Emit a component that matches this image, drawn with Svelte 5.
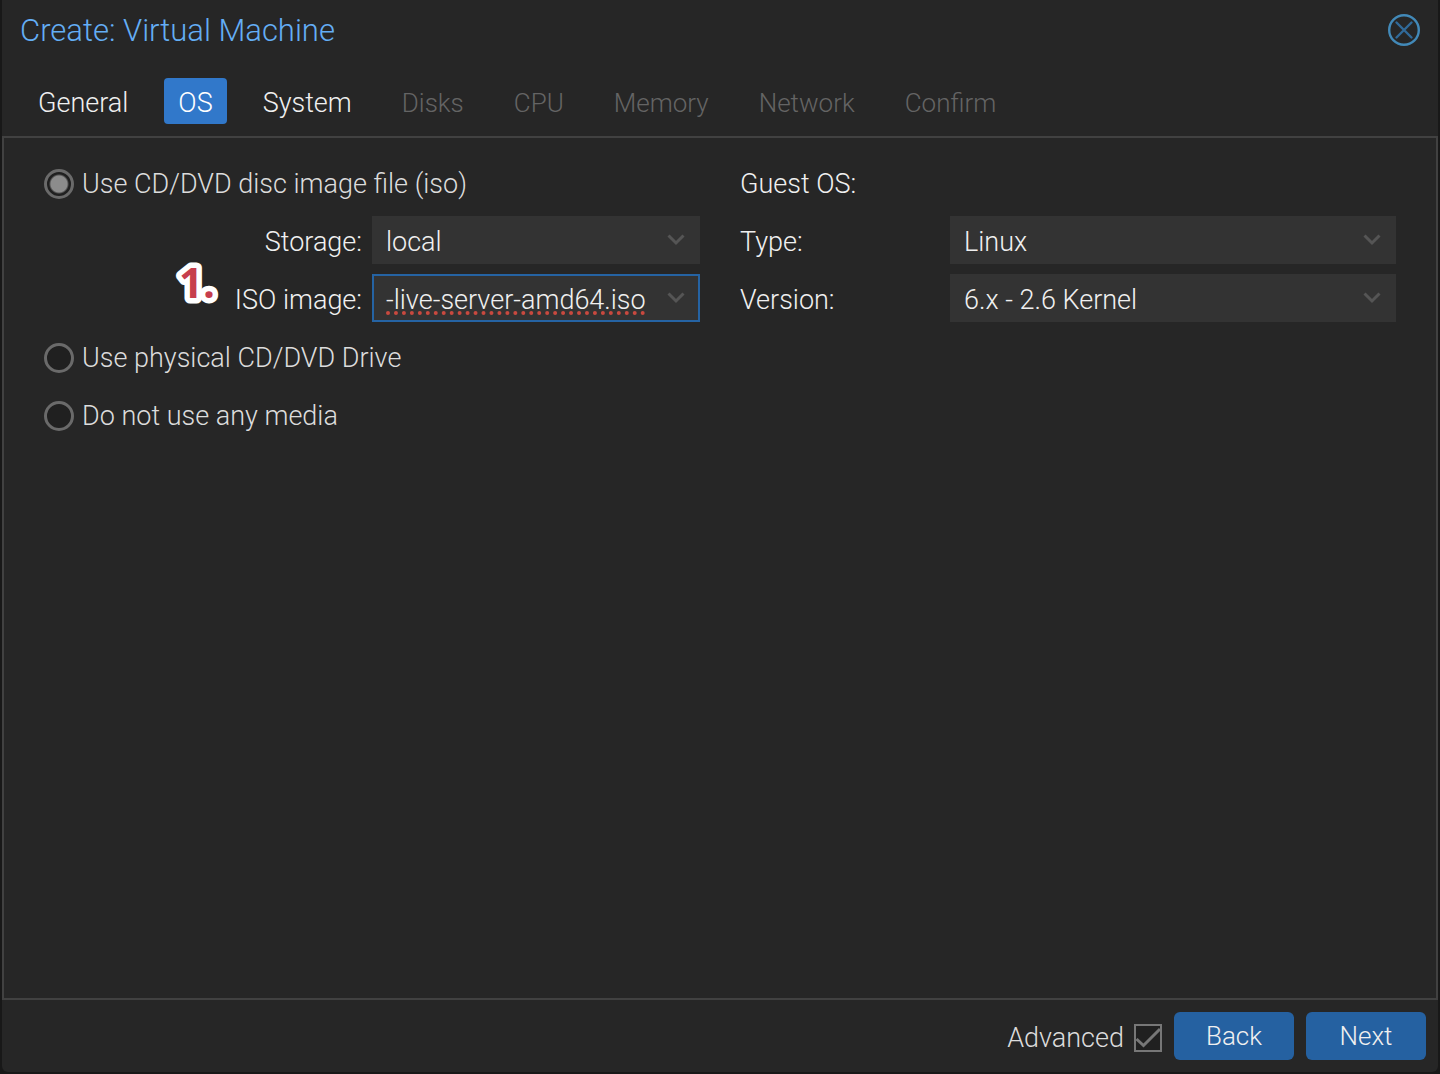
<script>
  const steps = [
    { id: 'general', label: 'General', enabled: true },
    { id: 'os', label: 'OS', enabled: true },
    { id: 'system', label: 'System', enabled: true },
    { id: 'disks', label: 'Disks', enabled: false },
    { id: 'cpu', label: 'CPU', enabled: false },
    { id: 'memory', label: 'Memory', enabled: false },
    { id: 'network', label: 'Network', enabled: false },
    { id: 'confirm', label: 'Confirm', enabled: false },
  ];

  let activeStep = $state('os');
  let media = $state('iso');
  let isoImage = $state('-live-server-amd64.iso');
  let storage = $state('local');
  let osType = $state('Linux');
  let osVersion = $state('6.x - 2.6 Kernel');
  let advanced = $state(true);

  function move(offset) {
    const open = steps.filter((s) => s.enabled);
    const next = open[open.findIndex((s) => s.id === activeStep) + offset];
    if (next) activeStep = next.id;
  }
</script>

{#snippet chevron()}
  <svg class="chevron" viewBox="0 0 20 14" aria-hidden="true">
    <path d="M2.5 2.5 10 10l7.5-7.5" />
  </svg>
{/snippet}

<div class="window" role="dialog" aria-labelledby="window-title">
  <header class="title-bar">
    <h1 id="window-title">Create: Virtual Machine</h1>
    <button class="close" type="button" aria-label="Close">
      <svg viewBox="0 0 32 32" aria-hidden="true">
        <circle cx="16" cy="16" r="14.8" />
        <path d="M8.5 8.5l15 15M23.5 8.5l-15 15" />
      </svg>
    </button>
  </header>

  <div class="tabs" role="tablist">
    {#each steps as step (step.id)}
      <button
        class="tab"
        class:active={step.id === activeStep}
        type="button"
        role="tab"
        aria-selected={step.id === activeStep}
        disabled={!step.enabled}
        onclick={() => (activeStep = step.id)}
      >
        {step.label}
      </button>
    {/each}
  </div>

  <main class="panel">
    <div class="column">
      <label class="choice">
        <input type="radio" name="media" value="iso" bind:group={media} />
        Use CD/DVD disc image file (iso)
      </label>

      <div class="field media-field">
        <label for="storage">Storage:</label>
        <div class="combo">
          <select id="storage" bind:value={storage}>
            <option>local</option>
          </select>
          {@render chevron()}
        </div>
      </div>

      <div class="field media-field">
        <label for="iso-image">ISO image:</label>
        <div class="combo">
          <input
            id="iso-image"
            class="misspelled"
            type="text"
            spellcheck="false"
            bind:value={isoImage}
          />
          {@render chevron()}
        </div>
        <svg class="marker" viewBox="0 0 48 48">
          <text x="5" y="36">1.</text>
        </svg>
      </div>

      <label class="choice">
        <input type="radio" name="media" value="cdrom" bind:group={media} />
        Use physical CD/DVD Drive
      </label>

      <label class="choice">
        <input type="radio" name="media" value="none" bind:group={media} />
        Do not use any media
      </label>
    </div>

    <div class="column">
      <div class="heading">Guest OS:</div>

      <div class="field">
        <label for="os-type">Type:</label>
        <div class="combo">
          <select id="os-type" bind:value={osType}>
            <option>Linux</option>
          </select>
          {@render chevron()}
        </div>
      </div>

      <div class="field">
        <label for="os-version">Version:</label>
        <div class="combo">
          <select id="os-version" bind:value={osVersion}>
            <option>6.x - 2.6 Kernel</option>
          </select>
          {@render chevron()}
        </div>
      </div>
    </div>
  </main>

  <footer class="buttons">
    <label class="advanced">
      Advanced
      <span class="check">
        <input type="checkbox" bind:checked={advanced} />
        {#if advanced}
          <svg viewBox="0 0 28 28" aria-hidden="true">
            <path d="M2.5 15 9.5 21.5 26 5" />
          </svg>
        {/if}
      </span>
    </label>
    <button class="action" type="button" onclick={() => move(-1)}>Back</button>
    <button class="action" type="button" onclick={() => move(1)}>Next</button>
  </footer>
</div>

<style>
  :global(body) {
    background: #181818;
  }

  :global(*) {
    box-sizing: border-box;
  }

  .window {
    display: flex;
    flex-direction: column;
    min-height: calc(100vh - 2px);
    margin: 0 2px 2px;
    border-radius: 0 0 6px 6px;
    background: #262626;
    color: #f0f0f0;
    font-family: Roboto, 'Liberation Sans', sans-serif;
    font-size: 27px;
    font-weight: 300;
    line-height: 32px;
  }

  button,
  input,
  select {
    margin: 0;
    font: inherit;
    color: inherit;
  }

  .title-bar {
    display: flex;
    align-items: center;
    justify-content: space-between;
    height: 60px;
    padding: 0 18px;
  }

  h1 {
    margin: 0;
    padding-top: 2px;
    color: #64aef5;
    font-size: 31px;
    font-weight: 300;
  }

  .close {
    width: 32px;
    height: 32px;
    padding: 0;
    border: none;
    background: transparent;
    cursor: pointer;
  }

  .close svg {
    display: block;
    fill: none;
    stroke: #4289b8;
    stroke-width: 2.4;
  }

  .close path {
    stroke: #316a99;
    stroke-linecap: round;
  }

  .tabs {
    display: flex;
    gap: 22px;
    padding: 18px 22px 12px;
  }

  .tab {
    height: 46px;
    padding: 4px 14px 0;
    border: none;
    border-radius: 4px;
    background: transparent;
    white-space: nowrap;
    cursor: pointer;
  }

  .tab.active {
    background: #3178ca;
    color: #fff;
  }

  .tab:disabled {
    color: #646464;
    font-size: 26px;
    cursor: default;
  }

  .panel {
    flex: 1;
    display: grid;
    grid-template-columns: 1fr 1fr;
    align-items: start;
    gap: 40px;
    padding: 20px 40px;
    border: 2px solid #414141;
  }

  .column {
    display: grid;
    gap: 10px;
  }

  .choice,
  .heading {
    display: flex;
    align-items: center;
    height: 48px;
    padding-top: 3px;
  }

  .choice {
    gap: 8px;
    color: #dcdcdc;
  }

  .choice input {
    appearance: none;
    width: 30px;
    height: 30px;
    border: 3px solid #6a6a6a;
    border-radius: 50%;
    background: #202020;
  }

  .choice input:checked {
    background: radial-gradient(circle, #8c8c8c 8px, #202020 10px);
  }

  .field {
    position: relative;
    display: grid;
    grid-template-columns: 210px 1fr;
    align-items: center;
  }

  .media-field {
    grid-template-columns: 1fr 1fr;
  }

  .media-field label {
    padding-right: 10px;
    text-align: right;
  }

  .field label {
    padding-top: 4px;
  }

  .combo {
    position: relative;
  }

  .combo select,
  .combo input {
    appearance: none;
    display: block;
    width: 100%;
    height: 48px;
    padding: 4px 48px 0 12px;
    border: 2px solid #333;
    border-radius: 0;
    outline: none;
    background: #333;
  }

  .combo input {
    border-color: #2563a3;
  }

  .misspelled {
    text-decoration: underline dotted #c9493f 4px;
    text-underline-offset: 2px;
    text-decoration-skip-ink: none;
  }

  .chevron {
    position: absolute;
    top: 17px;
    right: 14px;
    width: 20px;
    height: 14px;
    fill: none;
    stroke: #555;
    stroke-width: 3;
    pointer-events: none;
  }

  .marker {
    position: absolute;
    top: -12px;
    left: 130px;
    width: 48px;
    height: 48px;
    overflow: visible;
    fill: #c73e4d;
    stroke: #fff;
    stroke-width: 11;
    stroke-linejoin: round;
    paint-order: stroke fill;
    font-family: 'Open Sans', sans-serif;
    font-size: 42px;
    font-weight: 700;
  }

  .buttons {
    display: flex;
    align-items: center;
    justify-content: flex-end;
    gap: 12px;
    padding: 12px;
  }

  .advanced {
    display: flex;
    align-items: center;
    gap: 10px;
    padding-top: 3px;
    color: #dcdcdc;
  }

  .check {
    position: relative;
    width: 28px;
    height: 28px;
  }

  .check input {
    appearance: none;
    display: block;
    width: 28px;
    height: 28px;
    border: 2px solid #777;
    background: #202020;
  }

  .check svg {
    position: absolute;
    inset: 0;
    fill: none;
    stroke: #777;
    stroke-width: 3;
    pointer-events: none;
  }

  .action {
    width: 120px;
    height: 48px;
    padding: 0;
    border: none;
    border-radius: 6px;
    background: #2561a1;
    font-size: 26px;
    cursor: pointer;
  }
</style>
